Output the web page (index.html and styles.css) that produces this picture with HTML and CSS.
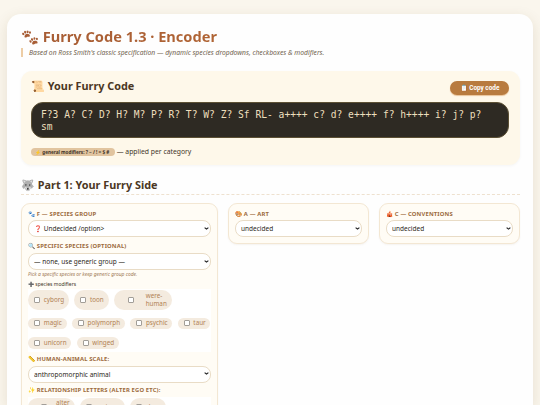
FILE: index.html
```html
<!DOCTYPE html>
<html lang="en">
<head>
  <meta charset="UTF-8">
  <title>Furry Code 1.3 · Encoder</title>
  <link rel="stylesheet" href="styles.css">
</head>
<body>
  <div class="container">
    <h1>🐾 Furry Code 1.3 · Encoder</h1>
    <div class="subtitle">Based on Ross Smith's classic specification — dynamic species dropdowns, checkboxes &amp; modifiers.</div>

    <div class="code-panel">
      <div class="code-header">
        <h2>📜 Your Furry Code</h2>
        <button class="copy-btn">📋 Copy code</button>
      </div>
      <div class="code-output">F?3 A? C? D? H? M? P? R? T? W? Z? Sf RL- a++++ c? d? e++++ f? h++++ i? j? p? sm</div>
      <div class="note"><span class="badge">⚡ general modifiers: ? ~ / ! = $ #</span> — applied per category</div>
    </div>

    <h2 class="section-title">🐺 Part 1: Your Furry Side</h2>

    <div class="grid">
      <div class="card">
        <label class="title">🐾 F — Species group</label>
        <select><option>❓ Undecided /option&gt;</option></select>
        <label class="title second">🔍 Specific species (optional)</label>
        <select><option>— none, use generic group —</option></select>
        <div class="hint">Pick a specific species or keep generic group code.</div>
        <div class="mods">➕ species modifiers</div>
        <div class="checks">
          <label class="chip"><input type="checkbox"><span>cyborg</span></label>
          <label class="chip"><input type="checkbox"><span>toon</span></label>
          <label class="chip were"><input type="checkbox"><span>were-<br>human</span></label>
          <label class="chip"><input type="checkbox"><span>magic</span></label>
          <label class="chip"><input type="checkbox"><span>polymorph</span></label>
          <label class="chip"><input type="checkbox"><span>psychic</span></label>
          <label class="chip"><input type="checkbox"><span>taur</span></label>
          <label class="chip"><input type="checkbox"><span>unicorn</span></label>
          <label class="chip"><input type="checkbox"><span>winged</span></label>
        </div>
        <label class="title scale">📏 Human-animal scale:</label>
        <select><option>anthropomorphic animal</option></select>
        <label class="title relation">✨ Relationship letters (alter ego etc):</label>
        <div class="checks">
          <label class="chip alter"><input type="checkbox"><span>alter<br>ego</span></label>
          <label class="chip partner"><input type="checkbox"><span>partner</span></label>
          <label class="chip"><input type="checkbox"><span>clone</span></label>
        </div>
      </div>

      <div class="card">
        <label class="title">🎨 A — Art</label>
        <select><option>undecided</option></select>
      </div>

      <div class="card">
        <label class="title">🎪 C — Conventions</label>
        <select><option>undecided</option></select>
      </div>
    </div>
  </div>
</body>
</html>
```

FILE: styles.css
```css
*{
	box-sizing:border-box;
}
body{
	margin:0;
	height:405px;
	padding:14px 7px 0;
	overflow:hidden;
	background:#faf6ed;
	font-family:"Noto Sans",sans-serif;
	color:#3f3428;
}
.container{
	height:391px;
	overflow:hidden;
	padding:14px 13.5px 0 14px;
	background:#fefefe;
	border-radius:14px 14px 0 0;
	box-shadow:0 4px 14px rgba(100,70,20,.13);
}
h1{
	width:max-content;
	margin:0;
	height:19px;
	font-size:14.6px;
	line-height:17px;
	background:linear-gradient(135deg,#a65c35,#b06434);
	-webkit-background-clip:text;
	background-clip:text;
	color:transparent;
}
.subtitle{
	height:9px;
	margin-top:1px;
	padding-left:6px;
	border-left:2px solid #edcda5;
	font-size:6.75px;
	line-height:9px;
	font-style:italic;
	color:#72634f;
}
.code-panel{
	height:94px;
	margin-top:14px;
	padding:8px 10.5px 0 10px;
	background:#fef8ea;
	border-radius:11px;
	box-shadow:0 1px 3px rgba(0,0,0,.04);
}
.code-header{
	display:flex;
	justify-content:space-between;
	height:23px;
}
h2{
	margin:0;
	font-size:10.85px;
	line-height:14px;
	color:#4b3724;
}
.copy-btn{
	width:59px;
	height:14px;
	margin-top:2px;
	padding:0;
	border:none;
	border-radius:8px;
	background:#b87b3f;
	box-shadow:0 1px 1px #e9c298;
	font-family:Roboto,sans-serif;
	font-size:6.4px;
	font-weight:bold;
	color:#fff;
}
.code-output{
	height:36px;
	padding:6px 15px 0 9px;
	border-radius:12px;
	background:#2e2a23;
	border:.5px solid #5c5034;
	font-family:"DejaVu Sans Mono",monospace;
	font-size:9.64px;
	line-height:11.5px;
	color:#eddfbd;
}
.note{
	height:11px;
	margin-top:8px;
	font-size:6.8px;
	line-height:11px;
}
.badge{
	display:inline-block;
	width:84px;
	height:8px;
	padding-left:4px;
	border-radius:5px;
	background:#e1c49f;
	font-size:4.65px;
	font-weight:bold;
	line-height:8px;
	white-space:nowrap;
	vertical-align:middle;
}
.section-title{
	height:18px;
	margin:12px 0 8px;
	line-height:15px;
	border-bottom:1px dashed #eee1cf;
}
.grid{
	display:grid;
	grid-template-columns:197px 141px 140.5px;
	gap:10px;
	align-items:start;
}
.card{
	padding:6px 6px;
	border:1px solid #f3e7d3;
	border-radius:9px;
	background:#fffcf5;
	box-shadow:0 1px 2px rgba(100,70,20,.06);
}
.title{
	display:block;
	height:10px;
	font-size:5.85px;
	line-height:8px;
	font-weight:bold;
	letter-spacing:.15px;
	text-transform:uppercase;
	white-space:nowrap;
	color:#9c6b3d;
}
.second{
	height:11px;
	margin-top:5px;
}
.scale{
	height:11px;
	margin-top:3px;
}
.relation{
	height:11px;
	margin-top:3px;
}
select{
	display:block;
	width:100%;
	height:17px;
	padding:0 5px;
	border:1px solid #e9dcc6;
	border-radius:8px;
	appearance:none;
	background:#fff url("data:image/svg+xml,%3Csvg xmlns='http://www.w3.org/2000/svg' viewBox='0 0 8 6'%3E%3Cpath d='M1 1.2l3 3 3-3' fill='none' stroke='%23222' stroke-width='1.8'/%3E%3C/svg%3E") no-repeat right 1.5px center/4.5px 3.4px;
	font-family:"Noto Sans",sans-serif;
	font-size:6.5px;
	color:#2d2820;
}
.hint{
	height:9px;
	font-size:4.95px;
	line-height:9px;
	font-style:italic;
	color:#a17b57;
}
.mods{
	height:10px;
	font-size:5px;
	line-height:10px;
}
.checks{
	display:flex;
	flex-wrap:wrap;
	gap:8px 5.2px;
	padding:1px 0 3px;
	background:#fff;
}
.chip{
	display:flex;
	align-items:center;
	min-height:11.5px;
	padding:0 4.8px 0 6.3px;
	border-radius:10px;
	background:#f4ebdf;
	font-size:6.3px;
	line-height:8px;
	color:#b18153;
}
.chip input{
	appearance:none;
	width:6px;
	height:6px;
	margin:0 3.5px 0 0;
	border:1px solid #a29e98;
	border-radius:1px;
	background:#fff;
}
.were,
.alter{
	height:19.5px;
	padding:0 5px 0 14px;
}
.were input{
	margin-right:12px;
}
.alter{
	padding-left:13px;
}
.alter input{
	margin-right:9px;
}
.partner{
	width:45px;
}
```
